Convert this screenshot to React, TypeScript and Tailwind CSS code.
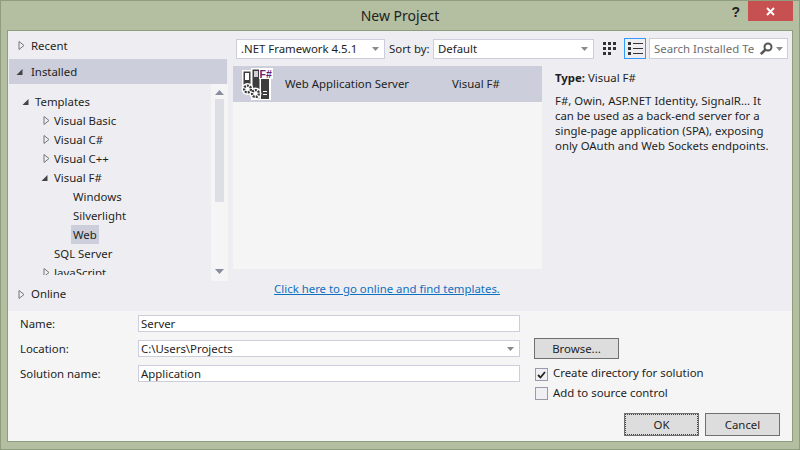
function Expander({ open }: { open?: boolean }) {
  return (
    <svg width="7" height="9" viewBox="0 0 7 9" className="shrink-0">
      {open ? (
        <path d="M0.5 8 L6.5 8 L6.5 2 Z" fill="#444444" />
      ) : (
        <path d="M1 0.5 L6 4.5 L1 8.5 Z" fill="#f0f0f4" stroke="#777777" />
      )}
    </svg>
  );
}

function Caret() {
  return (
    <svg width="7" height="4" viewBox="0 0 7 4" className="shrink-0">
      <path d="M0 0 L7 0 L3.5 4 Z" fill="#8a8a8a" />
    </svg>
  );
}

function TreeRow({ label, indent, expander, selected }: { label: string; indent: string; expander?: 'open' | 'closed'; selected?: boolean }) {
  return (
    <div className={`flex h-[19px] items-center ${indent}`}>
      <div className={`flex w-[16px] justify-end ${expander === 'open' ? 'pr-[4px]' : 'pr-[2px]'}`}>
        {expander && <Expander open={expander === 'open'} />}
      </div>
      <span className={`px-[2px] leading-[19px] ${selected ? 'bg-[#cccedb]' : ''}`}>{label}</span>
    </div>
  );
}

function ProjectIcon() {
  return (
    <svg width="32" height="32" viewBox="0 0 32 32" className="shrink-0">
      <rect x="1" y="2" width="10" height="16" fill="#fff" />
      <rect x="2.5" y="3.5" width="7" height="14" fill="#3d3d3d" />
      <rect x="4" y="5" width="4" height="7" fill="#fff" />
      <rect x="10" y="0" width="20" height="32" fill="#fff" />
      <rect x="11.5" y="1.5" width="7" height="29" fill="#3d3d3d" />
      <rect x="13" y="3" width="4" height="6" fill="#cfcfd8" />
      <rect x="20" y="11" width="8" height="20" fill="#3d3d3d" />
      <rect x="22" y="23" width="4" height="1" fill="#fff" />
      <rect x="22" y="26" width="4" height="1" fill="#fff" />
      <rect x="18" y="0" width="14" height="11" fill="#fff" />
      <text x="18.5" y="9.5" fontFamily="'Liberation Sans', sans-serif" fontSize="10.5" fontWeight="700" fill="#68217a">F#</text>
      <circle cx="6.5" cy="21" r="6" fill="#fff" />
      <circle cx="14.5" cy="25.5" r="6" fill="#fff" />
      <circle cx="6.5" cy="21" r="3.4" fill="none" stroke="#3d3d3d" strokeWidth="2.4" strokeDasharray="2 1" />
      <circle cx="14.5" cy="25.5" r="3.4" fill="none" stroke="#3d3d3d" strokeWidth="2.4" strokeDasharray="2 1" />
    </svg>
  );
}

function SmallIconsView() {
  return (
    <svg width="14" height="14" viewBox="0 0 14 14">
      <g fill="#333333">
        <rect x="0" y="0" width="3" height="3" /><rect x="5" y="0" width="3" height="3" /><rect x="10" y="0" width="3" height="3" />
        <rect x="0" y="5" width="3" height="3" /><rect x="5" y="5" width="3" height="3" /><rect x="10" y="5" width="3" height="3" />
        <rect x="0" y="10" width="3" height="3" /><rect x="5" y="10" width="3" height="3" />
      </g>
    </svg>
  );
}

function ListView() {
  return (
    <svg width="15" height="13" viewBox="0 0 15 13">
      <g fill="#333333">
        <rect x="0" y="0" width="3" height="3" /><rect x="5" y="1" width="10" height="1" />
        <rect x="0" y="5" width="3" height="3" /><rect x="5" y="6" width="10" height="1" />
        <rect x="0" y="10" width="3" height="3" /><rect x="5" y="11" width="10" height="1" />
      </g>
    </svg>
  );
}

function Magnifier() {
  return (
    <svg width="14" height="14" viewBox="0 0 14 14" className="shrink-0">
      <circle cx="9" cy="5" r="3.5" fill="none" stroke="#555555" strokeWidth="2" />
      <path d="M6.5 7.5 L1.8 12.2" stroke="#555555" strokeWidth="2.6" />
    </svg>
  );
}

export default function App() {
  return (
    <div className="flex h-[450px] w-[800px] flex-col overflow-hidden border border-[#8f9c7e] bg-[#b3bfa0] px-[6px] pb-[7px] font-['Noto_Sans',sans-serif] text-[11.4px] text-[#1e1e1e]">
      <div className="grid h-[29px] shrink-0 grid-cols-[1fr_auto_1fr] items-start">
        <div />
        <div className="pt-[5px] text-[14px] leading-[20px] text-[#222222]">New Project</div>
        <div className="flex items-start justify-end gap-[8px]">
          <span className="pt-[3px] font-['Liberation_Sans',sans-serif] text-[14px] font-bold leading-[16px] text-[#222222]">?</span>
          <div className="flex h-[20px] w-[45px] items-center justify-center bg-[#c75050]">
            <svg width="9" height="9" viewBox="0 0 9 9"><path d="M1 1 L8 8 M8 1 L1 8" stroke="#ffffff" strokeWidth="2" /></svg>
          </div>
        </div>
      </div>

      <div className="flex min-h-0 flex-1 flex-col border border-[#8f9c7e] bg-[#eeeef2]">
        <div className="flex h-[280px] shrink-0">
          <div className="flex w-[220px] shrink-0 flex-col">
            <div className="flex h-[28px] shrink-0 items-center gap-[6px] pl-[10px] pt-[1px]">
              <Expander />
              <span>Recent</span>
            </div>
            <div className="ml-[1px] mr-[1px] flex h-[25px] shrink-0 items-center gap-[8px] bg-[#cccedb] pl-[7px]">
              <Expander open />
              <span>Installed</span>
            </div>
            <div className="flex h-[197px] shrink-0">
              <div className="h-[191px] flex-1 overflow-hidden pl-[1px] pt-[8px]">
                <TreeRow label="Templates" indent="pl-[8px]" expander="open" />
                <TreeRow label="Visual Basic" indent="pl-[27px]" expander="closed" />
                <TreeRow label="Visual C#" indent="pl-[27px]" expander="closed" />
                <TreeRow label="Visual C++" indent="pl-[27px]" expander="closed" />
                <TreeRow label="Visual F#" indent="pl-[27px]" expander="open" />
                <TreeRow label="Windows" indent="pl-[46px]" />
                <TreeRow label="Silverlight" indent="pl-[46px]" />
                <TreeRow label="Web" indent="pl-[46px]" selected />
                <TreeRow label="SQL Server" indent="pl-[27px]" />
                <TreeRow label="JavaScript" indent="pl-[27px]" expander="closed" />
              </div>
              <div className="flex w-[17px] shrink-0 flex-col items-center bg-[#f5f5f5] pt-[6px]">
                <svg width="9" height="5" viewBox="0 0 9 5"><path d="M4.5 0 L9 5 L0 5 Z" fill="#8a8ca0" /></svg>
                <div className="mt-[4px] h-[103px] w-[9px] bg-[#dedee6]" />
                <div className="flex-1" />
                <svg width="9" height="5" viewBox="0 0 9 5" className="mb-[7px]"><path d="M0 0 L9 0 L4.5 5 Z" fill="#8a8ca0" /></svg>
              </div>
            </div>
            <div className="flex flex-1 items-center gap-[6px] pb-[4px] pl-[10px]">
              <Expander />
              <span>Online</span>
            </div>
          </div>

          <div className="flex min-w-0 flex-1 flex-col pl-[5px] pt-[7px]">
            <div className="flex h-[21px] shrink-0 items-center">
              <div className="ml-[3px] flex h-[20px] w-[149px] items-center justify-between border border-[#cccedb] bg-white pl-[4px] pr-[5px]">
                <span>.NET Framework 4.5.1</span>
                <Caret />
              </div>
              <span className="ml-[4px] w-[44px]">Sort by:</span>
              <div className="flex h-[20px] w-[161px] items-center justify-between border border-[#cccedb] bg-white pl-[4px] pr-[5px]">
                <span>Default</span>
                <Caret />
              </div>
              <div className="ml-[4px] flex h-[21px] w-[23px] items-center justify-center">
                <SmallIconsView />
              </div>
              <div className="ml-[3px] flex h-[21px] w-[22px] items-center justify-center border border-[#3399ff]">
                <ListView />
              </div>
              <div className="ml-[3px] flex h-[21px] w-[139px] items-center justify-between border border-[#cccedb] bg-white pl-[4px] pr-[4px]">
                <span className="whitespace-nowrap text-[#6d6d6d]">Search Installed Te</span>
                <div className="flex items-center gap-[3px]">
                  <Magnifier />
                  <Caret />
                </div>
              </div>
            </div>
            <div className="mt-[7px] flex min-h-0 flex-1">
              <div className="flex h-[203px] w-[309px] shrink-0 flex-col bg-[#f5f5f5]">
                <div className="flex h-[36px] shrink-0 items-center bg-[#cccedb] pl-[8px]">
                  <ProjectIcon />
                  <span className="ml-[12px] w-[167px]">Web Application Server</span>
                  <span>Visual F#</span>
                </div>
              </div>
              <div className="w-[231px] pl-[13px]">
                <div className="pt-[4px] leading-[16px]">
                  <span className="font-bold">Type:</span> Visual F#
                </div>
                <p className="mt-[7px] leading-[15px]">
                  F#, Owin, ASP.NET Identity, SignalR... It can be used as a back-end server for a single-page application (SPA), exposing only OAuth and Web Sockets endpoints.
                </p>
              </div>
            </div>
            <div className="mb-[14px] w-[309px] pr-[1px] text-center leading-[16px] text-[#0e70c0] underline">
              Click here to go online and find templates.
            </div>
          </div>
        </div>

        <div className="flex flex-1 bg-[#f5f5f5] pl-[12px] pt-[4px]">
          <div className="flex w-[118px] shrink-0 flex-col gap-[8px]">
            <div className="h-[17px] leading-[17px]">Name:</div>
            <div className="h-[17px] leading-[17px]">Location:</div>
            <div className="h-[17px] leading-[17px]">Solution name:</div>
          </div>
          <div className="flex w-[382px] shrink-0 flex-col gap-[8px]">
            <div className="flex h-[17px] items-center border border-[#cccedb] bg-white pl-[2px] leading-[15px]">Server</div>
            <div className="flex h-[17px] items-center justify-between border border-[#cccedb] bg-white pl-[2px] pr-[5px] leading-[15px]">
              <span>C:\Users\Projects</span>
              <Caret />
            </div>
            <div className="flex h-[17px] items-center border border-[#cccedb] bg-white pl-[2px] leading-[15px]">Application</div>
          </div>
          <div className="ml-[14px] flex flex-1 flex-col pt-[23px]">
            <div className="flex h-[21px] w-[85px] items-center justify-center border border-[#707070] bg-[#dddddd]">Browse...</div>
            <div className="mt-[6px] flex h-[16px] items-center gap-[6px] pl-[1px]">
              <div className="mt-[3px] flex h-[13px] w-[13px] items-center justify-center border border-[#9a9aa8] bg-[#f0f0f4]">
                <svg width="9" height="8" viewBox="0 0 9 8"><path d="M1 4 L3.5 6.5 L8 1" fill="none" stroke="#222222" strokeWidth="1.8" /></svg>
              </div>
              <span className="-ml-[1px]">Create directory for solution</span>
            </div>
            <div className="mt-[4px] flex h-[16px] items-center gap-[6px] pl-[1px]">
              <div className="mt-[1px] h-[13px] w-[13px] border border-[#9a9aa8] bg-[#f0f0f4]" />
              <span className="-ml-[1px]">Add to source control</span>
            </div>
            <div className="mt-[12px] flex justify-end gap-[6px] pr-[12px]">
              <div className="flex h-[23px] w-[75px] items-center justify-center border border-[#707070] bg-[#dddddd] outline-1 -outline-offset-2 outline-dotted outline-[#444444]">OK</div>
              <div className="flex h-[23px] w-[75px] items-center justify-center border border-[#707070] bg-[#dddddd]">Cancel</div>
            </div>
          </div>
        </div>
      </div>
    </div>
  );
}
